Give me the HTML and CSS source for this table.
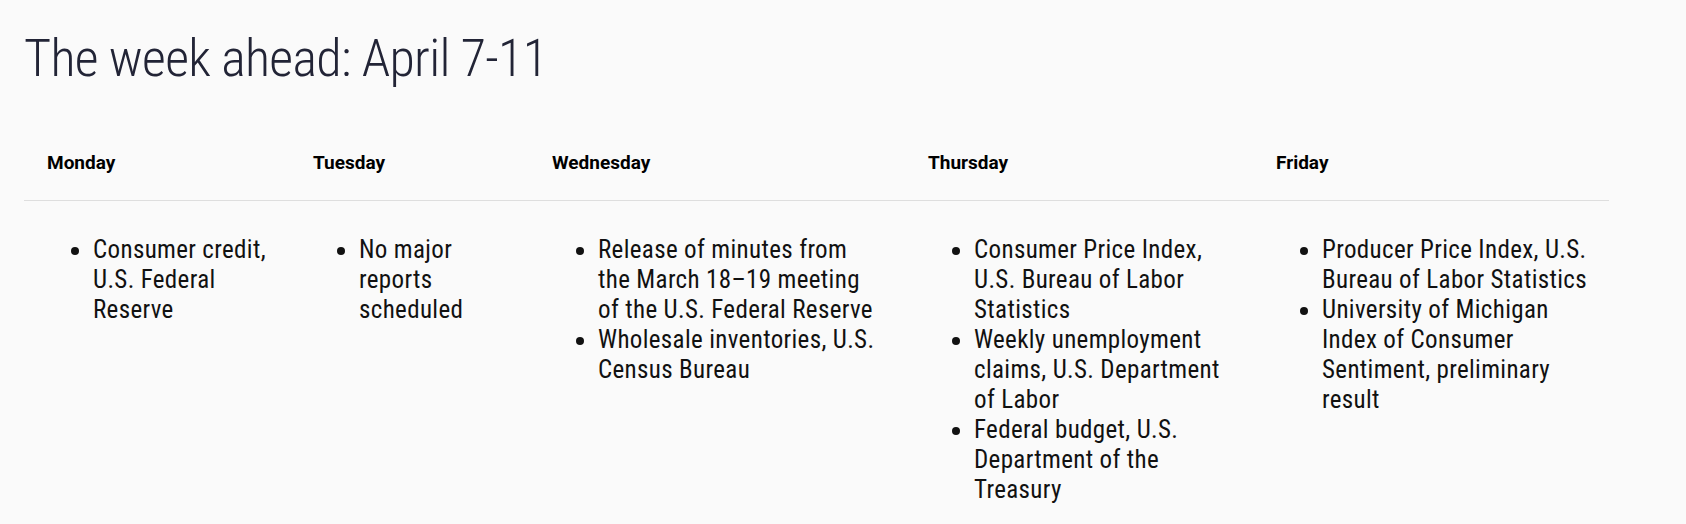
FILE: index.html
```html
<!DOCTYPE html>
<html lang="en">
<head>
<meta charset="utf-8">
<title>The week ahead: April 7-11</title>
<link rel="stylesheet" href="styles.css">
</head>
<body>
<main class="page">
  <h1 class="title">The week ahead: April 7-11</h1>
  <section class="week">
    <div class="day-head">Monday</div>
    <div class="day-head">Tuesday</div>
    <div class="day-head">Wednesday</div>
    <div class="day-head">Thursday</div>
    <div class="day-head">Friday</div>

    <div class="day-body">
      <ul class="events">
        <li>Consumer credit, U.S. Federal Reserve</li>
      </ul>
    </div>
    <div class="day-body">
      <ul class="events">
        <li>No major reports scheduled</li>
      </ul>
    </div>
    <div class="day-body">
      <ul class="events">
        <li>Release of minutes from the March 18–19 meeting of the U.S. Federal Reserve</li>
        <li>Wholesale inventories, U.S. Census Bureau</li>
      </ul>
    </div>
    <div class="day-body">
      <ul class="events">
        <li>Consumer Price Index, U.S. Bureau of Labor Statistics</li>
        <li>Weekly unemployment claims, U.S. Department of Labor</li>
        <li>Federal budget, U.S. Department of the Treasury</li>
      </ul>
    </div>
    <div class="day-body">
      <ul class="events">
        <li>Producer Price Index, U.S. Bureau of Labor Statistics</li>
        <li>University of Michigan Index of Consumer Sentiment, preliminary result</li>
      </ul>
    </div>
  </section>
</main>
</body>
</html>
```
FILE: styles.css
```css
html, body {
  margin: 0;
  padding: 0;
  background: #fafafa;
}

.page {
  padding: 0 0 0 24px;
}

.title {
  margin: 28px 0 0 0;
  font-family: "Roboto Condensed", "Roboto", sans-serif;
  font-stretch: 75%;
  font-weight: 300;
  font-size: 52px;
  line-height: 62px;
  letter-spacing: -0.7px;
  color: #222436;
}

.week {
  margin-top: 38px;
  width: 1585px;
  display: grid;
  grid-template-columns: 266px 239px 376px 348px 356px;
}

.day-head {
  padding: 23px 23px 25px 23px;
  border-bottom: 1px solid #dedede;
  font-family: "Roboto", sans-serif;
  font-weight: 700;
  font-size: 19px;
  line-height: 24px;
  color: #000;
}

.day-body {
  padding: 34px 20px 0 23px;
}

.events {
  margin: 0;
  padding: 0 0 0 46px;
  font-family: "Roboto Condensed", "Roboto", sans-serif;
  font-stretch: 75%;
  font-weight: 400;
  font-size: 25px;
  line-height: 30px;
  letter-spacing: 0.35px;
  color: #111;
}
```
